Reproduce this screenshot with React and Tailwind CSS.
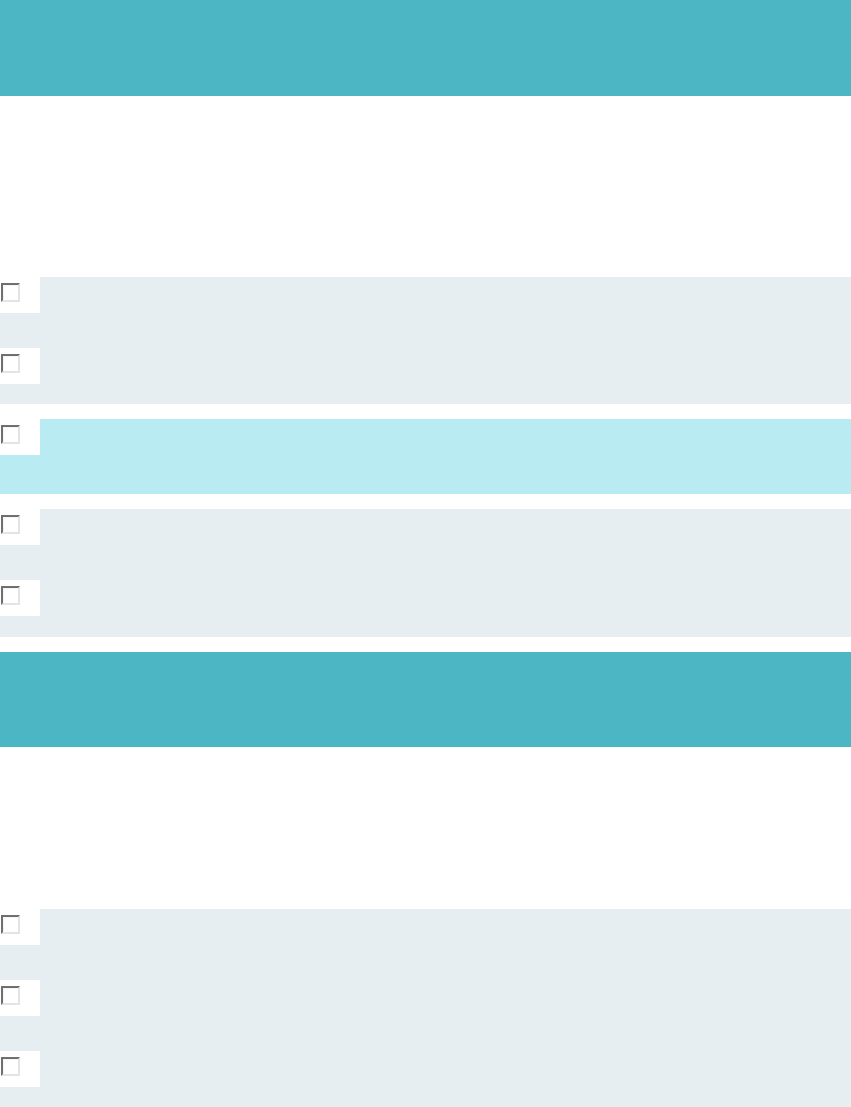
import React from "react";

function Check() {
  return (
    <div className="w-10 h-9 bg-white shrink-0 pl-px pt-1.5">
      <div className="w-[19px] h-[19px] bg-white border-2 border-t-[#6f6f6f] border-l-[#6f6f6f] border-b-[#e4e4e4] border-r-[#e4e4e4] shadow-[inset_1px_1px_0_#f4f4f4]" />
    </div>
  );
}

function Group({ rows, bg, pb }) {
  return (
    <div className={`flex flex-col gap-[35px] ${bg} ${pb}`}>
      {Array.from({ length: rows }).map((_, i) => (
        <div key={i} className="flex h-9">
          <Check />
          <div className="flex-1" />
        </div>
      ))}
    </div>
  );
}

export default function App() {
  return (
    <div className="w-[851px] h-[1107px] bg-white overflow-hidden font-['Liberation_Sans',sans-serif]">
      <div className="flex flex-col">
        <div className="h-24 bg-[#4db6c4]" />
        <div className="h-[181px] bg-white" />
        <Group rows={2} bg="bg-[#e7eef1]" pb="pb-5" />
        <div className="h-[15px]" />
        <Group rows={1} bg="bg-[#b8ecf2]" pb="pb-[39px]" />
        <div className="h-[15px]" />
        <Group rows={2} bg="bg-[#e7eef1]" pb="pb-[21px]" />
        <div className="h-[15px]" />
        <div className="h-[95px] bg-[#4db6c4]" />
        <div className="h-[162px] bg-white" />
        <Group rows={3} bg="bg-[#e7eef1]" pb="pb-5" />
      </div>
    </div>
  );
}
